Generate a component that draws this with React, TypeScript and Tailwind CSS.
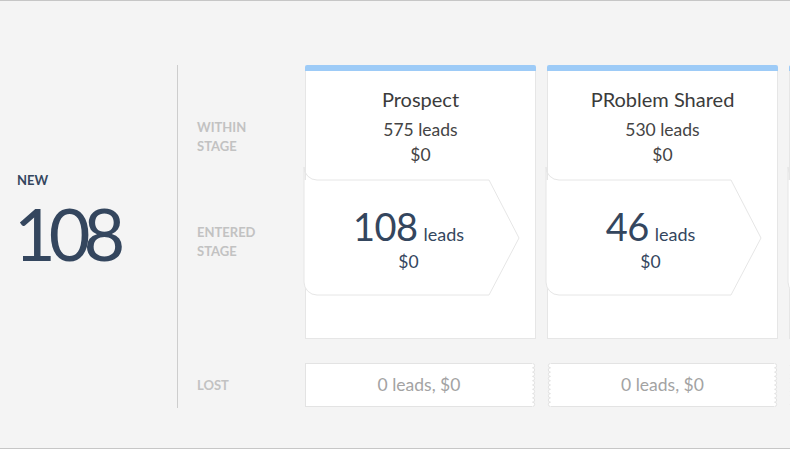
import React from "react";

type Card = { title: string; within: number; entered: number };

const cards: Card[] = [
  { title: "Prospect", within: 575, entered: 108 },
  { title: "PRoblem Shared", within: 530, entered: 46 },
];

function Scallop({ side }: { side: "left" | "right" }) {
  const h = 44;
  const n = 10;
  const step = (h - 1) / n;
  const sweep = side === "right" ? 1 : 0;
  const x = side === "right" ? 0.5 : 3.5;
  let d = `M${x},0.5`;
  for (let i = 0; i < n; i++) {
    d += ` a${step / 2},${step / 2} 0 0 ${sweep} 0,${step}`;
  }
  const fillD = side === "right" ? `${d} H0 V0.5 Z` : `${d} H4 V0.5 Z`;
  return (
    <svg width="4" height={h} viewBox={`0 0 4 ${h}`} className="block shrink-0">
      <path d={fillD} fill="#ffffff" />
      <path d={d} fill="none" stroke="#e3e3e3" strokeWidth="1" />
    </svg>
  );
}

function Arrow() {
  return (
    <svg
      width="218"
      height="132"
      viewBox="0 0 218 132"
      className="absolute left-[-3px] top-[-12px] block"
    >
      <path
        d="M1,14 H186 L216,72 L186,129 H14 A13,13 0 0 1 1,116 Z"
        fill="#ffffff"
      />
      <path
        d="M1,1 A13,13 0 0 0 14,14 H186 L216,72 L186,129 H14 A13,13 0 0 1 1,116 V1"
        fill="none"
        stroke="#e6e6e6"
        strokeWidth="1"
      />
    </svg>
  );
}

function StageColumn({ card, index }: { card: Card; index: number }) {
  return (
    <div className="flex w-[231px] shrink-0 flex-col">
      <div className="flex h-[274px] flex-col">
        <div className="h-[6px] rounded-t-[2px] bg-[#9dcbf7]" />
        <div className="relative flex flex-1 flex-col border-x border-b border-[#e6e6e6] bg-white">
          <div className="h-[107px] pt-[16px] text-center text-[#3b3b3b]">
            <div className="text-[20px] leading-[24px]">{card.title}</div>
            <div className="mt-[6px] text-[17.5px] leading-[25px] text-[#444]">
              {card.within} leads
            </div>
            <div className="text-[17.5px] leading-[25px] text-[#444]">$0</div>
          </div>
          <div className="relative h-[116px]">
            <Arrow />
            <div className="relative flex w-[205px] flex-col items-center pt-[28px]">
              <div className="flex items-baseline leading-[40px] text-[#34465e]">
                <span className="text-[38px] tracking-[-0.5px]">{card.entered}</span>
                <span className="ml-[6px] text-[18px]">leads</span>
              </div>
              <div className="mt-[-3px] text-[17.5px] leading-[22px] text-[#34465e]">$0</div>
            </div>
          </div>
        </div>
      </div>
      <div className="mt-[24px] flex h-[44px]">
        {index > 0 && <Scallop side="left" />}
        <div
          className={
            index > 0
              ? "flex flex-1 items-center justify-center border-y border-[#e3e3e3] bg-white text-[17.5px] text-[#a3a3a3]"
              : "flex flex-1 items-center justify-center border-y border-l border-[#e3e3e3] bg-white text-[17.5px] text-[#a3a3a3]"
          }
        >
          0 leads, $0
        </div>
        <Scallop side="right" />
      </div>
    </div>
  );
}

function PartialColumn() {
  return (
    <div className="flex w-[231px] shrink-0 flex-col">
      <div className="flex h-[274px] flex-col">
        <div className="h-[6px] rounded-t-[2px] bg-[#9dcbf7]" />
        <div className="relative flex flex-1 flex-col border-x border-b border-[#e6e6e6] bg-white">
          <div className="h-[107px]" />
          <div className="relative h-[116px]">
            <Arrow />
          </div>
        </div>
      </div>
      <div className="mt-[24px] flex h-[44px]">
        <Scallop side="left" />
        <div className="flex-1 border-y border-[#e3e3e3] bg-white" />
      </div>
    </div>
  );
}

export default function App() {
  return (
    <div
      className="h-[449px] w-[790px] overflow-hidden border-y border-[#c6c6c6] bg-[#f4f4f4]"
      style={{ fontFamily: "Lato, 'Noto Sans', sans-serif" }}
    >
      <div className="mt-[64px] flex h-[343px]">
        <div className="w-[177px] shrink-0 pl-[17px] pt-[107px]">
          <div className="text-[13px] font-bold leading-[16px] text-[#34465e]">NEW</div>
          <div className="ml-[-3px] mt-[8px] text-[72px] leading-[74px] tracking-[-7px] text-[#34465e]">
            108
          </div>
        </div>
        <div className="w-px shrink-0 bg-[#cdcdcd]" />
        <div className="w-[127px] shrink-0 pl-[19px] pt-[53px] text-[13px] font-bold leading-[19px] text-[#c2c2c2]">
          <div>
            WITHIN
            <br />
            STAGE
          </div>
          <div className="mt-[67px]">
            ENTERED
            <br />
            STAGE
          </div>
          <div className="mt-[115px]">LOST</div>
        </div>
        <div className="flex gap-[11px]">
          {cards.map((c, i) => (
            <StageColumn key={c.title} card={c} index={i} />
          ))}
          <PartialColumn />
        </div>
      </div>
    </div>
  );
}
